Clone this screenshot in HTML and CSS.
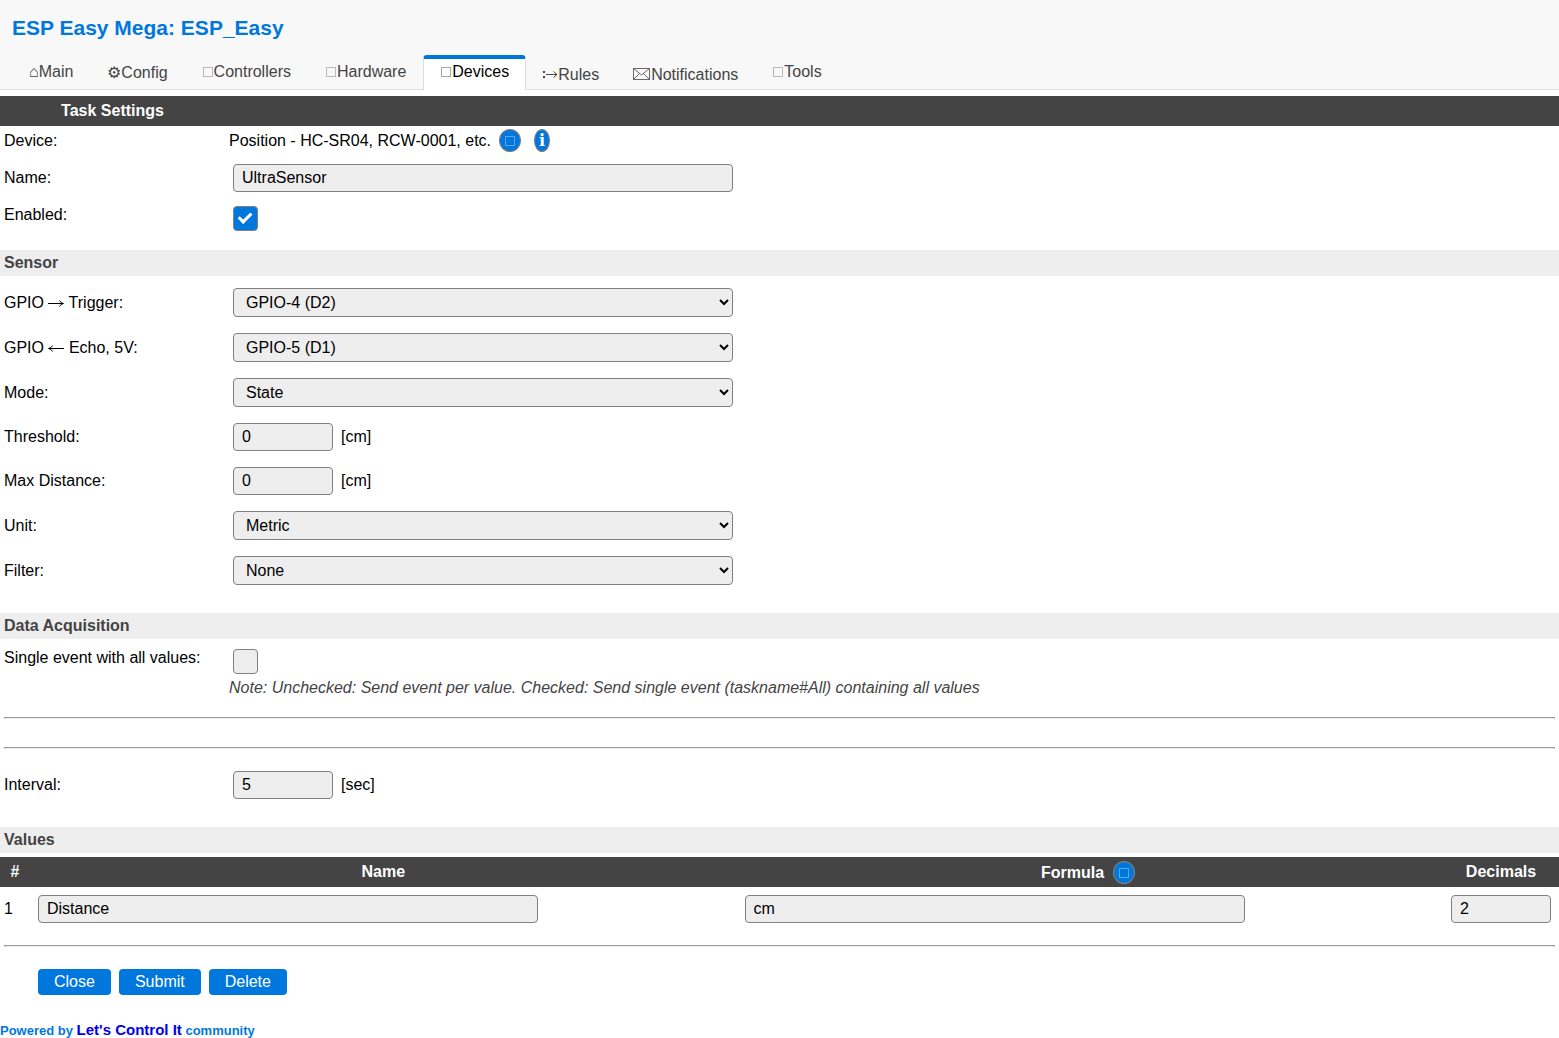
FILE: index.html
```html
<!DOCTYPE html>
<html lang="en">
<head>
<meta charset="utf-8">
<meta name="viewport" content="width=device-width, initial-scale=1">
<title>ESP_Easy</title>
<link rel="stylesheet" href="styles.css">
</head>
<body>
<header class="page-header">
  <h1>ESP Easy Mega: ESP_Easy</h1>
  <nav class="menu">
    <a class="tab" href="#main">&#8962;Main</a>
    <a class="tab low" href="#config">&#9881;Config</a>
    <a class="tab" href="#controllers"><i class="box"></i>Controllers</a>
    <a class="tab" href="#hardware"><i class="box"></i>Hardware</a>
    <a class="tab active" href="#devices"><i class="box"></i>Devices</a>
    <a class="tab lower" href="#rules"><svg class="icon" width="15" height="10" viewBox="0 0 15 10" aria-hidden="true"><path d="M0 1h2v2H0zM0 6h2v2H0z" fill="currentColor"/><path d="M3 4.500h11M10.500 1.500l3.500 3-3.500 3" fill="none" stroke="currentColor"/></svg>Rules</a>
    <a class="tab lower" href="#notifications"><svg class="icon" width="18" height="12" viewBox="0 0 18 12" aria-hidden="true"><path d="M.5.500h16v11H.5zM.5.500l8 6.500 8-6.500M.5 11.500l6-6M16.500 11.500l-6-6" fill="none" stroke="currentColor" stroke-width=".8"/></svg>Notifications</a>
    <a class="tab" href="#tools"><i class="box"></i>Tools</a>
  </nav>
</header>
<main>
<form>
  <div class="title-bar"><h2>Task Settings</h2></div>
  <div class="row">
    <span>Device:</span>
    <div class="line">Position - HC-SR04, RCW-0001, etc. <a class="help" href="#help" aria-label="Help"><i class="box"></i></a> <a class="help info" href="#info">i</a></div>
  </div>
  <div class="row">
    <label for="name">Name:</label>
    <div><input class="field wide" id="name" type="text" value="UltraSensor"></div>
  </div>
  <div class="row check-row">
    <label for="enabled">Enabled:</label>
    <div><input class="check" id="enabled" type="checkbox" checked></div>
  </div>

  <h3>Sensor</h3>
  <div class="row">
    <label for="trigger">GPIO <svg class="arrow" width="16" height="9" viewBox="0 0 16 9" role="img" aria-label="to"><path d="M0 4.500h15M11.500 1.500q1 2.500 4 3-3 .5-4 3" fill="none" stroke="currentColor"/></svg> Trigger:</label>
    <div><select class="field wide" id="trigger"><option>GPIO-4 (D2)</option></select></div>
  </div>
  <div class="row">
    <label for="echo">GPIO <svg class="arrow" width="16" height="9" viewBox="0 0 16 9" role="img" aria-label="from"><path d="M16 4.500h-15M4.500 1.500q-1 2.500-4 3 3 .5 4 3" fill="none" stroke="currentColor"/></svg> Echo, 5V:</label>
    <div><select class="field wide" id="echo"><option>GPIO-5 (D1)</option></select></div>
  </div>
  <div class="row">
    <label for="mode">Mode:</label>
    <div><select class="field wide" id="mode"><option>State</option></select></div>
  </div>
  <div class="row">
    <label for="threshold">Threshold:</label>
    <div class="with-unit"><input class="field" id="threshold" type="text" value="0"><span>[cm]</span></div>
  </div>
  <div class="row">
    <label for="max">Max Distance:</label>
    <div class="with-unit"><input class="field" id="max" type="text" value="0"><span>[cm]</span></div>
  </div>
  <div class="row">
    <label for="unit">Unit:</label>
    <div><select class="field wide" id="unit"><option>Metric</option></select></div>
  </div>
  <div class="row">
    <label for="filter">Filter:</label>
    <div><select class="field wide" id="filter"><option>None</option></select></div>
  </div>

  <h3>Data Acquisition</h3>
  <div class="row check-row">
    <label for="single">Single event with all values:</label>
    <div><input class="check" id="single" type="checkbox"></div>
  </div>
  <div class="row">
    <span></span>
    <p class="note">Note: Unchecked: Send event per value. Checked: Send single event (taskname#All) containing all values</p>
  </div>
  <hr>
  <hr>
  <div class="row">
    <label for="interval">Interval:</label>
    <div class="with-unit"><input class="field" id="interval" type="text" value="5"><span>[sec]</span></div>
  </div>

  <h3>Values</h3>
  <table class="values">
    <thead>
      <tr>
        <th class="col-index">#</th>
        <th>Name</th>
        <th>Formula <a class="help" href="#formula-help" aria-label="Formula help"><i class="box"></i></a></th>
        <th class="col-decimals">Decimals</th>
      </tr>
    </thead>
    <tbody>
      <tr>
        <td>1</td>
        <td><input class="field wide" type="text" value="Distance" aria-label="Name"></td>
        <td><input class="field wide" type="text" value="cm" aria-label="Formula"></td>
        <td><input class="field" type="text" value="2" aria-label="Decimals"></td>
      </tr>
    </tbody>
  </table>
  <hr>
  <div class="actions">
    <a class="button" href="#devices">Close</a>
    <button class="button" type="button">Submit</button>
    <button class="button" type="button">Delete</button>
  </div>
</form>
</main>
<footer>Powered by <a href="#community">Let's Control It</a> community</footer>
</body>
</html>
```
FILE: styles.css
```css
* {
  box-sizing: border-box;
  margin: 0;
  padding: 0;
  font-family: "Liberation Sans", Arial, sans-serif;
  font-size: 16px;
}

body {
  background: #fff;
  color: #000;
}

.page-header {
  padding: 16px 12px 0;
  background: #f8f8f8;
  border-bottom: 1px solid #ddd;
}

h1 {
  font-size: 21px;
  line-height: 24px;
  color: #07d;
}

.menu {
  display: flex;
  height: 35px;
  margin: 15px 0 -1px;
}

.tab {
  padding: 4px 16px 0;
  border: 1px solid transparent;
  border-top-width: 4px;
  border-bottom: 0;
  border-radius: 4px 4px 0 0;
  color: #444;
  line-height: 18px;
  text-decoration: none;
  white-space: nowrap;
}

.tab.low {
  line-height: 20px;
}

.tab.lower {
  line-height: 24px;
}

.tab.active {
  background: #fff;
  border-color: #07d #ddd #ddd;
  color: #000;
}

.box {
  display: inline-block;
  width: 10px;
  height: 10px;
  margin: 0 1px;
  border: 1px solid;
  opacity: .35;
}

.icon {
  vertical-align: 0;
}

.arrow {
  vertical-align: 0;
}

.title-bar {
  margin-top: 6px;
  background: #444;
}

h2 {
  width: 225px;
  line-height: 30px;
  text-align: center;
  color: #fff;
}

h3 {
  margin: 20px 0 4px;
  padding: 0 4px;
  line-height: 26px;
  background: #eee;
  color: #444;
}

.row {
  display: grid;
  grid-template-columns: 225px 1fr;
  align-items: center;
  min-height: 30px;
  padding: 4px;
  line-height: 20px;
}

.line {
  height: 22px;
  line-height: 22px;
}

.check-row {
  height: 30px;
  align-items: start;
  line-height: 22px;
}

.field {
  width: 100px;
  height: 28px;
  margin: 4px;
  padding: 4px 8px;
  vertical-align: middle;
  background: #eee;
  border: 1px solid gray;
  border-radius: 4px;
  color: #000;
}

.wide {
  width: 500px;
  max-width: calc(100% - 8px);
}

.row > div {
  display: flow-root;
}

.row > .with-unit {
  display: flex;
  align-items: center;
  gap: 4px;
}

select.field {
  height: 29px;
}

.check {
  display: block;
  appearance: none;
  position: relative;
  width: 25px;
  height: 25px;
  margin: 2px 4px 0;
  background: #eee;
  border: 1px solid gray;
  border-radius: 4px;
}

.check:checked {
  background: #07d;
}

.check:checked::after {
  content: "";
  position: absolute;
  left: 7px;
  top: 3px;
  width: 5px;
  height: 10px;
  border: solid #fff;
  border-width: 0 3px 3px 0;
  transform: rotate(45deg);
}

.help {
  display: inline-block;
  height: 23px;
  margin: -2px 4px;
  padding: 0 4px;
  border: 1px solid gray;
  border-radius: 50%;
  background: #07d;
  color: #fff;
  font-weight: bold;
  line-height: 21px;
  text-decoration: none;
}

.info {
  font-family: "DejaVu Serif", serif;
}

.note {
  font-style: italic;
  color: #444;
}

hr {
  margin: 14px 4px;
  border: 1px solid #999;
  border-bottom-color: #eee;
}

hr + hr {
  margin-top: 28px;
}

.values {
  width: 100%;
  border-collapse: collapse;
  table-layout: fixed;
}

.values th {
  height: 30px;
  background: #444;
  color: #fff;
}

.values td {
  height: 44px;
  padding: 4px;
}

.col-index {
  width: 30px;
}

.col-decimals {
  width: 116px;
}

.actions {
  display: flex;
  align-items: flex-start;
  gap: 8px;
  padding: 8px 38px;
}

.button {
  padding: 4px 16px;
  border: 0;
  border-radius: 4px;
  background: #07d;
  color: #fff;
  line-height: 18px;
  text-decoration: none;
}

footer {
  margin-top: 18px;
  font-size: 13px;
  font-weight: bold;
  color: #07d;
}

footer a {
  font-size: 15px;
  color: #00e;
  text-decoration: none;
}
```
